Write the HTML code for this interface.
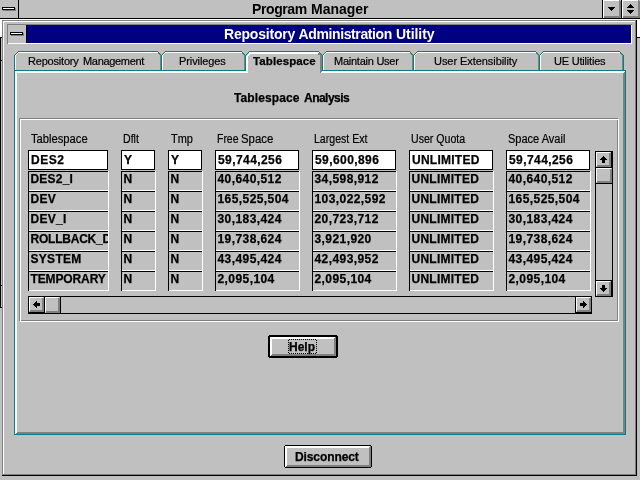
<!DOCTYPE html>
<html lang="en"><head><meta charset="utf-8"><title>Repository Administration Utility</title>
<style>
html,body{margin:0;padding:0;}
body{width:640px;height:480px;overflow:hidden;background:#c0c0c0;position:relative;font-family:"Liberation Sans",sans-serif;color:#000;}
#scr{position:absolute;left:0;top:0;width:640px;height:480px;overflow:hidden;will-change:transform;}
.r{position:absolute;}
.t{position:absolute;white-space:nowrap;display:block;}
.sys{font-weight:bold;font-size:14px;line-height:18px;letter-spacing:-0.2px;}
.cap{color:#fff;}
.tab{font-size:11px;line-height:13px;-webkit-text-stroke:0.2px #000;}
.tabb{font-size:11.5px;line-height:13px;font-weight:bold;-webkit-text-stroke:0.25px #000;}
.hdg{font-size:12px;line-height:14px;font-weight:bold;-webkit-text-stroke:0.25px #000;}
.hdr{font-size:12px;line-height:14px;transform-origin:0 0;-webkit-text-stroke:0.2px #000;}
.btn{font-size:12px;line-height:16px;font-weight:bold;-webkit-text-stroke:0.25px #000;}
.cell{position:absolute;box-sizing:border-box;border-top:1px solid #000;border-left:1px solid #000;border-right:1px solid #fff;border-bottom:1px solid #fff;overflow:hidden;}
.cell.act{background:#fff;border:1px solid #000;}
.ct{position:absolute;white-space:nowrap;font-weight:bold;font-size:12px;line-height:14px;letter-spacing:0.42px;-webkit-text-stroke:0.25px #000;}
</style></head>
<body>
<div id="scr">
<div class="r" style="left:0px;top:0px;width:640px;height:18px;background:#c0c0c0;"></div>
<div class="r" style="left:0px;top:18px;width:640px;height:1px;background:#000;"></div>
<div class="r" style="left:18px;top:0px;width:1px;height:19px;background:#000;"></div>
<div class="r" style="left:3px;top:8px;width:13px;height:3px;background:#808080;"></div>
<div class="r" style="left:2px;top:7px;width:13px;height:3px;background:#000;"></div>
<div class="r" style="left:3px;top:8px;width:11px;height:1px;background:#fff;"></div>
<div class="r" style="left:602px;top:0px;width:1px;height:19px;background:#000;"></div>
<div class="r" style="left:603px;top:0px;width:18px;height:18px;background:#c0c0c0;"></div>
<div class="r" style="left:603px;top:0px;width:1px;height:18px;background:#fff;"></div>
<div class="r" style="left:603px;top:0px;width:16px;height:1px;background:#fff;"></div>
<div class="r" style="left:619px;top:1px;width:2px;height:17px;background:#808080;"></div>
<div class="r" style="left:604px;top:16px;width:17px;height:2px;background:#808080;"></div>
<div class="r" style="left:619px;top:0px;width:1px;height:1px;background:#808080;"></div>
<div class="r" style="left:621px;top:0px;width:1px;height:19px;background:#000;"></div>
<div class="r" style="left:622px;top:0px;width:18px;height:18px;background:#c0c0c0;"></div>
<div class="r" style="left:622px;top:0px;width:1px;height:18px;background:#fff;"></div>
<div class="r" style="left:622px;top:0px;width:16px;height:1px;background:#fff;"></div>
<div class="r" style="left:638px;top:1px;width:2px;height:17px;background:#808080;"></div>
<div class="r" style="left:623px;top:16px;width:17px;height:2px;background:#808080;"></div>
<div class="r" style="left:638px;top:0px;width:1px;height:1px;background:#808080;"></div>
<div class="r" style="left:608px;top:7px;width:7px;height:1px;background:#000;"></div>
<div class="r" style="left:609px;top:8px;width:5px;height:1px;background:#000;"></div>
<div class="r" style="left:610px;top:9px;width:3px;height:1px;background:#000;"></div>
<div class="r" style="left:611px;top:10px;width:1px;height:1px;background:#000;"></div>
<div class="r" style="left:630px;top:4px;width:1px;height:1px;background:#000;"></div>
<div class="r" style="left:629px;top:5px;width:3px;height:1px;background:#000;"></div>
<div class="r" style="left:628px;top:6px;width:5px;height:1px;background:#000;"></div>
<div class="r" style="left:627px;top:7px;width:7px;height:1px;background:#000;"></div>
<div class="r" style="left:627px;top:10px;width:7px;height:1px;background:#000;"></div>
<div class="r" style="left:628px;top:11px;width:5px;height:1px;background:#000;"></div>
<div class="r" style="left:629px;top:12px;width:3px;height:1px;background:#000;"></div>
<div class="r" style="left:630px;top:13px;width:1px;height:1px;background:#000;"></div>
<span class="t sys" style="left:252px;top:0px;letter-spacing:-0.4px;">Program</span>
<span class="t sys" style="left:311px;top:0px;letter-spacing:-0.03px;">Manager</span>
<div class="r" style="left:0px;top:19px;width:640px;height:18px;background:#fff;"></div>
<div class="r" style="left:0px;top:37px;width:640px;height:443px;background:#c0c0c0;"></div>
<div class="r" style="left:0px;top:37px;width:2px;height:1px;background:#000;"></div>
<div class="r" style="left:637px;top:37px;width:3px;height:1px;background:#000;"></div>
<div class="r" style="left:0px;top:37px;width:1px;height:271px;background:#000;"></div>
<div class="r" style="left:0px;top:307px;width:2px;height:1px;background:#000;"></div>
<div class="r" style="left:1px;top:60px;width:1px;height:1px;background:#000;"></div>
<div class="r" style="left:1px;top:285px;width:1px;height:1px;background:#000;"></div>
<div class="r" style="left:2px;top:20px;width:635px;height:456px;background:#c0c0c0;"></div>
<div class="r" style="left:2px;top:20px;width:1px;height:456px;background:#808080;"></div>
<div class="r" style="left:2px;top:20px;width:635px;height:1px;background:#808080;"></div>
<div class="r" style="left:3px;top:21px;width:1px;height:454px;background:#fff;"></div>
<div class="r" style="left:3px;top:21px;width:633px;height:1px;background:#fff;"></div>
<div class="r" style="left:635px;top:21px;width:1px;height:454px;background:#808080;"></div>
<div class="r" style="left:3px;top:474px;width:633px;height:1px;background:#808080;"></div>
<div class="r" style="left:636px;top:20px;width:1px;height:456px;background:#000;"></div>
<div class="r" style="left:2px;top:475px;width:635px;height:1px;background:#000;"></div>
<div class="r" style="left:7px;top:24px;width:1px;height:20px;background:#808080;"></div>
<div class="r" style="left:7px;top:24px;width:625px;height:1px;background:#808080;"></div>
<div class="r" style="left:631px;top:25px;width:1px;height:19px;background:#fff;"></div>
<div class="r" style="left:8px;top:43px;width:624px;height:1px;background:#fff;"></div>
<div class="r" style="left:8px;top:25px;width:18px;height:18px;background:#c0c0c0;"></div>
<div class="r" style="left:26px;top:25px;width:1px;height:18px;background:#000;"></div>
<div class="r" style="left:27px;top:25px;width:604px;height:18px;background:#000080;"></div>
<div class="r" style="left:11px;top:33px;width:13px;height:3px;background:#808080;"></div>
<div class="r" style="left:10px;top:32px;width:13px;height:3px;background:#000;"></div>
<div class="r" style="left:11px;top:33px;width:11px;height:1px;background:#fff;"></div>
<span class="t sys cap" style="left:224px;top:25px;letter-spacing:-0.2px;">Repository</span>
<span class="t sys cap" style="left:298.5px;top:25px;letter-spacing:-0.38px;">Administration</span>
<span class="t sys cap" style="left:396px;top:25px;letter-spacing:-0.05px;">Utility</span>
<div class="r" style="left:18px;top:51px;width:140px;height:1px;background:#008080;"></div>
<div class="r" style="left:18px;top:52px;width:140px;height:1px;background:#fff;"></div>
<div class="r" style="left:17px;top:52px;width:1px;height:1px;background:#008080;"></div>
<div class="r" style="left:158px;top:52px;width:1px;height:1px;background:#008080;"></div>
<div class="r" style="left:16px;top:53px;width:1px;height:1px;background:#008080;"></div>
<div class="r" style="left:159px;top:53px;width:1px;height:1px;background:#008080;"></div>
<div class="r" style="left:15px;top:54px;width:1px;height:1px;background:#008080;"></div>
<div class="r" style="left:160px;top:54px;width:1px;height:1px;background:#008080;"></div>
<div class="r" style="left:14px;top:55px;width:1px;height:1px;background:#008080;"></div>
<div class="r" style="left:161px;top:55px;width:1px;height:1px;background:#008080;"></div>
<div class="r" style="left:17px;top:53px;width:1px;height:1px;background:#fff;"></div>
<div class="r" style="left:16px;top:54px;width:1px;height:1px;background:#fff;"></div>
<div class="r" style="left:15px;top:55px;width:1px;height:1px;background:#fff;"></div>
<div class="r" style="left:15px;top:56px;width:1px;height:14px;background:#fff;"></div>
<div class="r" style="left:165px;top:51px;width:77px;height:1px;background:#008080;"></div>
<div class="r" style="left:165px;top:52px;width:77px;height:1px;background:#fff;"></div>
<div class="r" style="left:164px;top:52px;width:1px;height:1px;background:#008080;"></div>
<div class="r" style="left:242px;top:52px;width:1px;height:1px;background:#008080;"></div>
<div class="r" style="left:163px;top:53px;width:1px;height:1px;background:#008080;"></div>
<div class="r" style="left:243px;top:53px;width:1px;height:1px;background:#008080;"></div>
<div class="r" style="left:162px;top:54px;width:1px;height:1px;background:#008080;"></div>
<div class="r" style="left:244px;top:54px;width:1px;height:1px;background:#008080;"></div>
<div class="r" style="left:161px;top:55px;width:1px;height:1px;background:#008080;"></div>
<div class="r" style="left:245px;top:55px;width:1px;height:1px;background:#008080;"></div>
<div class="r" style="left:164px;top:53px;width:1px;height:1px;background:#fff;"></div>
<div class="r" style="left:163px;top:54px;width:1px;height:1px;background:#fff;"></div>
<div class="r" style="left:162px;top:55px;width:1px;height:1px;background:#fff;"></div>
<div class="r" style="left:162px;top:56px;width:1px;height:14px;background:#fff;"></div>
<div class="r" style="left:249px;top:51px;width:70px;height:1px;background:#008080;"></div>
<div class="r" style="left:249px;top:52px;width:69px;height:2px;background:#fff;"></div>
<div class="r" style="left:318px;top:52px;width:1px;height:1px;background:#fff;"></div>
<div class="r" style="left:248px;top:52px;width:1px;height:1px;background:#008080;"></div>
<div class="r" style="left:319px;top:52px;width:1px;height:1px;background:#008080;"></div>
<div class="r" style="left:247px;top:53px;width:1px;height:1px;background:#008080;"></div>
<div class="r" style="left:320px;top:53px;width:1px;height:1px;background:#008080;"></div>
<div class="r" style="left:246px;top:54px;width:1px;height:1px;background:#008080;"></div>
<div class="r" style="left:321px;top:54px;width:1px;height:1px;background:#008080;"></div>
<div class="r" style="left:245px;top:55px;width:1px;height:1px;background:#008080;"></div>
<div class="r" style="left:322px;top:55px;width:1px;height:1px;background:#008080;"></div>
<div class="r" style="left:249px;top:53px;width:2px;height:1px;background:#fff;"></div>
<div class="r" style="left:248px;top:54px;width:2px;height:1px;background:#fff;"></div>
<div class="r" style="left:247px;top:55px;width:2px;height:1px;background:#fff;"></div>
<div class="r" style="left:246px;top:56px;width:2px;height:15px;background:#fff;"></div>
<div class="r" style="left:326px;top:51px;width:84px;height:1px;background:#008080;"></div>
<div class="r" style="left:326px;top:52px;width:84px;height:1px;background:#fff;"></div>
<div class="r" style="left:325px;top:52px;width:1px;height:1px;background:#008080;"></div>
<div class="r" style="left:410px;top:52px;width:1px;height:1px;background:#008080;"></div>
<div class="r" style="left:324px;top:53px;width:1px;height:1px;background:#008080;"></div>
<div class="r" style="left:411px;top:53px;width:1px;height:1px;background:#008080;"></div>
<div class="r" style="left:323px;top:54px;width:1px;height:1px;background:#008080;"></div>
<div class="r" style="left:412px;top:54px;width:1px;height:1px;background:#008080;"></div>
<div class="r" style="left:322px;top:55px;width:1px;height:1px;background:#008080;"></div>
<div class="r" style="left:413px;top:55px;width:1px;height:1px;background:#008080;"></div>
<div class="r" style="left:325px;top:53px;width:1px;height:1px;background:#fff;"></div>
<div class="r" style="left:324px;top:54px;width:1px;height:1px;background:#fff;"></div>
<div class="r" style="left:323px;top:55px;width:1px;height:1px;background:#fff;"></div>
<div class="r" style="left:323px;top:56px;width:1px;height:14px;background:#fff;"></div>
<div class="r" style="left:417px;top:51px;width:119px;height:1px;background:#008080;"></div>
<div class="r" style="left:417px;top:52px;width:119px;height:1px;background:#fff;"></div>
<div class="r" style="left:416px;top:52px;width:1px;height:1px;background:#008080;"></div>
<div class="r" style="left:536px;top:52px;width:1px;height:1px;background:#008080;"></div>
<div class="r" style="left:415px;top:53px;width:1px;height:1px;background:#008080;"></div>
<div class="r" style="left:537px;top:53px;width:1px;height:1px;background:#008080;"></div>
<div class="r" style="left:414px;top:54px;width:1px;height:1px;background:#008080;"></div>
<div class="r" style="left:538px;top:54px;width:1px;height:1px;background:#008080;"></div>
<div class="r" style="left:413px;top:55px;width:1px;height:1px;background:#008080;"></div>
<div class="r" style="left:539px;top:55px;width:1px;height:1px;background:#008080;"></div>
<div class="r" style="left:416px;top:53px;width:1px;height:1px;background:#fff;"></div>
<div class="r" style="left:415px;top:54px;width:1px;height:1px;background:#fff;"></div>
<div class="r" style="left:414px;top:55px;width:1px;height:1px;background:#fff;"></div>
<div class="r" style="left:414px;top:56px;width:1px;height:14px;background:#fff;"></div>
<div class="r" style="left:543px;top:51px;width:77px;height:1px;background:#008080;"></div>
<div class="r" style="left:543px;top:52px;width:77px;height:1px;background:#fff;"></div>
<div class="r" style="left:542px;top:52px;width:1px;height:1px;background:#008080;"></div>
<div class="r" style="left:620px;top:52px;width:1px;height:1px;background:#008080;"></div>
<div class="r" style="left:541px;top:53px;width:1px;height:1px;background:#008080;"></div>
<div class="r" style="left:621px;top:53px;width:1px;height:1px;background:#008080;"></div>
<div class="r" style="left:540px;top:54px;width:1px;height:1px;background:#008080;"></div>
<div class="r" style="left:622px;top:54px;width:1px;height:1px;background:#008080;"></div>
<div class="r" style="left:539px;top:55px;width:1px;height:1px;background:#008080;"></div>
<div class="r" style="left:623px;top:55px;width:1px;height:1px;background:#008080;"></div>
<div class="r" style="left:542px;top:53px;width:1px;height:1px;background:#fff;"></div>
<div class="r" style="left:541px;top:54px;width:1px;height:1px;background:#fff;"></div>
<div class="r" style="left:540px;top:55px;width:1px;height:1px;background:#fff;"></div>
<div class="r" style="left:540px;top:56px;width:1px;height:14px;background:#fff;"></div>
<div class="r" style="left:14px;top:55px;width:1px;height:16px;background:#008080;"></div>
<div class="r" style="left:161px;top:55px;width:1px;height:16px;background:#008080;"></div>
<div class="r" style="left:245px;top:55px;width:1px;height:16px;background:#008080;"></div>
<div class="r" style="left:322px;top:55px;width:1px;height:16px;background:#008080;"></div>
<div class="r" style="left:413px;top:55px;width:1px;height:16px;background:#008080;"></div>
<div class="r" style="left:539px;top:55px;width:1px;height:16px;background:#008080;"></div>
<div class="r" style="left:623px;top:55px;width:1px;height:16px;background:#008080;"></div>
<div class="r" style="left:318px;top:53px;width:2px;height:1px;background:#808080;"></div>
<div class="r" style="left:319px;top:54px;width:2px;height:1px;background:#808080;"></div>
<div class="r" style="left:318px;top:54px;width:1px;height:1px;background:#808080;"></div>
<div class="r" style="left:320px;top:55px;width:2px;height:17px;background:#808080;"></div>
<div class="r" style="left:320px;top:72px;width:1px;height:1px;background:#808080;"></div>
<div class="r" style="left:321px;top:72px;width:1px;height:1px;background:#fff;"></div>
<div class="r" style="left:322px;top:71px;width:1px;height:2px;background:#fff;"></div>
<div class="r" style="left:160px;top:56px;width:1px;height:14px;background:#808080;"></div>
<div class="r" style="left:158px;top:53px;width:1px;height:1px;background:#808080;"></div>
<div class="r" style="left:159px;top:54px;width:1px;height:1px;background:#808080;"></div>
<div class="r" style="left:160px;top:55px;width:1px;height:1px;background:#808080;"></div>
<div class="r" style="left:244px;top:56px;width:1px;height:14px;background:#808080;"></div>
<div class="r" style="left:242px;top:53px;width:1px;height:1px;background:#808080;"></div>
<div class="r" style="left:243px;top:54px;width:1px;height:1px;background:#808080;"></div>
<div class="r" style="left:244px;top:55px;width:1px;height:1px;background:#808080;"></div>
<div class="r" style="left:412px;top:56px;width:1px;height:14px;background:#808080;"></div>
<div class="r" style="left:410px;top:53px;width:1px;height:1px;background:#808080;"></div>
<div class="r" style="left:411px;top:54px;width:1px;height:1px;background:#808080;"></div>
<div class="r" style="left:412px;top:55px;width:1px;height:1px;background:#808080;"></div>
<div class="r" style="left:538px;top:56px;width:1px;height:14px;background:#808080;"></div>
<div class="r" style="left:536px;top:53px;width:1px;height:1px;background:#808080;"></div>
<div class="r" style="left:537px;top:54px;width:1px;height:1px;background:#808080;"></div>
<div class="r" style="left:538px;top:55px;width:1px;height:1px;background:#808080;"></div>
<div class="r" style="left:622px;top:56px;width:1px;height:14px;background:#808080;"></div>
<div class="r" style="left:620px;top:53px;width:1px;height:1px;background:#808080;"></div>
<div class="r" style="left:621px;top:54px;width:1px;height:1px;background:#808080;"></div>
<div class="r" style="left:622px;top:55px;width:1px;height:1px;background:#808080;"></div>
<div class="r" style="left:14px;top:70px;width:232px;height:1px;background:#008080;"></div>
<div class="r" style="left:322px;top:70px;width:304px;height:1px;background:#008080;"></div>
<div class="r" style="left:14px;top:70px;width:1px;height:365px;background:#008080;"></div>
<div class="r" style="left:625px;top:70px;width:1px;height:365px;background:#008080;"></div>
<div class="r" style="left:14px;top:434px;width:612px;height:1px;background:#008080;"></div>
<div class="r" style="left:15px;top:71px;width:233px;height:2px;background:#fff;"></div>
<div class="r" style="left:323px;top:71px;width:300px;height:2px;background:#fff;"></div>
<div class="r" style="left:15px;top:71px;width:2px;height:362px;background:#fff;"></div>
<div class="r" style="left:623px;top:72px;width:2px;height:362px;background:#808080;"></div>
<div class="r" style="left:623px;top:72px;width:1px;height:1px;background:#fff;"></div>
<div class="r" style="left:623px;top:71px;width:2px;height:1px;background:#fff;"></div>
<div class="r" style="left:16px;top:432px;width:609px;height:2px;background:#808080;"></div>
<div class="r" style="left:16px;top:432px;width:1px;height:1px;background:#fff;"></div>
<div class="r" style="left:15px;top:433px;width:1px;height:1px;background:#fff;"></div>
<span class="t tab" style="left:28px;top:55px;letter-spacing:-0.2px;">Repository</span>
<span class="t tab" style="left:83px;top:55px;letter-spacing:-0.32px;">Management</span>
<span class="t tab" style="left:179px;top:55px;letter-spacing:-0.1px;">Privileges</span>
<span class="t tabb" style="left:253px;top:55px;letter-spacing:0.1px;">Tablespace</span>
<span class="t tab" style="left:334px;top:55px;letter-spacing:-0.25px;">Maintain User</span>
<span class="t tab" style="left:434px;top:55px;letter-spacing:-0.06px;">User Extensibility</span>
<span class="t tab" style="left:554px;top:55px;letter-spacing:-0.2px;">UE Utilities</span>
<span class="t hdg" style="left:234px;top:91px;letter-spacing:0.1px;">Tablespace</span>
<span class="t hdg" style="left:304px;top:91px;letter-spacing:-0.52px;">Analysis</span>
<div class="r" style="left:19px;top:118px;width:599px;height:1px;background:#808080;"></div>
<div class="r" style="left:19px;top:320px;width:599px;height:1px;background:#808080;"></div>
<div class="r" style="left:19px;top:118px;width:1px;height:203px;background:#808080;"></div>
<div class="r" style="left:617px;top:118px;width:1px;height:203px;background:#808080;"></div>
<div class="r" style="left:20px;top:119px;width:599px;height:1px;background:#fff;"></div>
<div class="r" style="left:20px;top:321px;width:599px;height:1px;background:#fff;"></div>
<div class="r" style="left:20px;top:119px;width:1px;height:203px;background:#fff;"></div>
<div class="r" style="left:618px;top:119px;width:1px;height:203px;background:#fff;"></div>
<span class="t hdr" style="left:31px;top:132px;transform:scaleX(0.933);">Tablespace</span>
<div class="cell act" style="left:28px;top:150px;width:80px;height:20px;"><span class="ct" style="left:2px;top:2px;letter-spacing:0.5px;">DES2</span></div>
<div class="cell" style="left:28px;top:171px;width:81px;height:20px;"><span class="ct" style="left:1.5px;top:0px;letter-spacing:0.2px;">DES2_I</span></div>
<div class="r" style="left:28px;top:190px;width:1px;height:1px;background:#000;"></div>
<div class="r" style="left:108px;top:171px;width:1px;height:1px;background:#fff;"></div>
<div class="cell" style="left:28px;top:191px;width:81px;height:20px;"><span class="ct" style="left:1.5px;top:0px;letter-spacing:0.3px;">DEV</span></div>
<div class="r" style="left:28px;top:210px;width:1px;height:1px;background:#000;"></div>
<div class="r" style="left:108px;top:191px;width:1px;height:1px;background:#fff;"></div>
<div class="cell" style="left:28px;top:211px;width:81px;height:20px;"><span class="ct" style="left:1.5px;top:0px;letter-spacing:0.3px;">DEV_I</span></div>
<div class="r" style="left:28px;top:230px;width:1px;height:1px;background:#000;"></div>
<div class="r" style="left:108px;top:211px;width:1px;height:1px;background:#fff;"></div>
<div class="cell" style="left:28px;top:231px;width:81px;height:20px;"><span class="ct" style="left:1.5px;top:0px;letter-spacing:-0.22px;">ROLLBACK_D</span></div>
<div class="r" style="left:28px;top:250px;width:1px;height:1px;background:#000;"></div>
<div class="r" style="left:108px;top:231px;width:1px;height:1px;background:#fff;"></div>
<div class="cell" style="left:28px;top:251px;width:81px;height:20px;"><span class="ct" style="left:1.5px;top:0px;letter-spacing:0.3px;">SYSTEM</span></div>
<div class="r" style="left:28px;top:270px;width:1px;height:1px;background:#000;"></div>
<div class="r" style="left:108px;top:251px;width:1px;height:1px;background:#fff;"></div>
<div class="cell" style="left:28px;top:271px;width:81px;height:20px;"><span class="ct" style="left:1.5px;top:0px;letter-spacing:-0.12px;">TEMPORARY</span></div>
<div class="r" style="left:28px;top:290px;width:1px;height:1px;background:#000;"></div>
<div class="r" style="left:108px;top:271px;width:1px;height:1px;background:#fff;"></div>
<span class="t hdr" style="left:123px;top:132px;transform:scaleX(0.88);">Dflt</span>
<div class="cell act" style="left:121px;top:150px;width:34px;height:20px;"><span class="ct" style="left:2px;top:2px;">Y</span></div>
<div class="cell" style="left:121px;top:171px;width:35px;height:20px;"><span class="ct" style="left:1.5px;top:0px;">N</span></div>
<div class="r" style="left:121px;top:190px;width:1px;height:1px;background:#000;"></div>
<div class="r" style="left:155px;top:171px;width:1px;height:1px;background:#fff;"></div>
<div class="cell" style="left:121px;top:191px;width:35px;height:20px;"><span class="ct" style="left:1.5px;top:0px;">N</span></div>
<div class="r" style="left:121px;top:210px;width:1px;height:1px;background:#000;"></div>
<div class="r" style="left:155px;top:191px;width:1px;height:1px;background:#fff;"></div>
<div class="cell" style="left:121px;top:211px;width:35px;height:20px;"><span class="ct" style="left:1.5px;top:0px;">N</span></div>
<div class="r" style="left:121px;top:230px;width:1px;height:1px;background:#000;"></div>
<div class="r" style="left:155px;top:211px;width:1px;height:1px;background:#fff;"></div>
<div class="cell" style="left:121px;top:231px;width:35px;height:20px;"><span class="ct" style="left:1.5px;top:0px;">N</span></div>
<div class="r" style="left:121px;top:250px;width:1px;height:1px;background:#000;"></div>
<div class="r" style="left:155px;top:231px;width:1px;height:1px;background:#fff;"></div>
<div class="cell" style="left:121px;top:251px;width:35px;height:20px;"><span class="ct" style="left:1.5px;top:0px;">N</span></div>
<div class="r" style="left:121px;top:270px;width:1px;height:1px;background:#000;"></div>
<div class="r" style="left:155px;top:251px;width:1px;height:1px;background:#fff;"></div>
<div class="cell" style="left:121px;top:271px;width:35px;height:20px;"><span class="ct" style="left:1.5px;top:0px;">N</span></div>
<div class="r" style="left:121px;top:290px;width:1px;height:1px;background:#000;"></div>
<div class="r" style="left:155px;top:271px;width:1px;height:1px;background:#fff;"></div>
<span class="t hdr" style="left:171px;top:132px;transform:scaleX(0.913);">Tmp</span>
<div class="cell act" style="left:168px;top:150px;width:34px;height:20px;"><span class="ct" style="left:2px;top:2px;">Y</span></div>
<div class="cell" style="left:168px;top:171px;width:35px;height:20px;"><span class="ct" style="left:1.5px;top:0px;">N</span></div>
<div class="r" style="left:168px;top:190px;width:1px;height:1px;background:#000;"></div>
<div class="r" style="left:202px;top:171px;width:1px;height:1px;background:#fff;"></div>
<div class="cell" style="left:168px;top:191px;width:35px;height:20px;"><span class="ct" style="left:1.5px;top:0px;">N</span></div>
<div class="r" style="left:168px;top:210px;width:1px;height:1px;background:#000;"></div>
<div class="r" style="left:202px;top:191px;width:1px;height:1px;background:#fff;"></div>
<div class="cell" style="left:168px;top:211px;width:35px;height:20px;"><span class="ct" style="left:1.5px;top:0px;">N</span></div>
<div class="r" style="left:168px;top:230px;width:1px;height:1px;background:#000;"></div>
<div class="r" style="left:202px;top:211px;width:1px;height:1px;background:#fff;"></div>
<div class="cell" style="left:168px;top:231px;width:35px;height:20px;"><span class="ct" style="left:1.5px;top:0px;">N</span></div>
<div class="r" style="left:168px;top:250px;width:1px;height:1px;background:#000;"></div>
<div class="r" style="left:202px;top:231px;width:1px;height:1px;background:#fff;"></div>
<div class="cell" style="left:168px;top:251px;width:35px;height:20px;"><span class="ct" style="left:1.5px;top:0px;">N</span></div>
<div class="r" style="left:168px;top:270px;width:1px;height:1px;background:#000;"></div>
<div class="r" style="left:202px;top:251px;width:1px;height:1px;background:#fff;"></div>
<div class="cell" style="left:168px;top:271px;width:35px;height:20px;"><span class="ct" style="left:1.5px;top:0px;">N</span></div>
<div class="r" style="left:168px;top:290px;width:1px;height:1px;background:#000;"></div>
<div class="r" style="left:202px;top:271px;width:1px;height:1px;background:#fff;"></div>
<span class="t hdr" style="left:217px;top:132px;transform:scaleX(0.87);">Free</span>
<span class="t hdr" style="left:241px;top:132px;transform:scaleX(0.95);">Space</span>
<div class="cell act" style="left:215px;top:150px;width:84px;height:20px;"><span class="ct" style="left:2px;top:2px;">59,744,256</span></div>
<div class="cell" style="left:215px;top:171px;width:85px;height:20px;"><span class="ct" style="left:1.5px;top:0px;">40,640,512</span></div>
<div class="r" style="left:215px;top:190px;width:1px;height:1px;background:#000;"></div>
<div class="r" style="left:299px;top:171px;width:1px;height:1px;background:#fff;"></div>
<div class="cell" style="left:215px;top:191px;width:85px;height:20px;"><span class="ct" style="left:1.5px;top:0px;">165,525,504</span></div>
<div class="r" style="left:215px;top:210px;width:1px;height:1px;background:#000;"></div>
<div class="r" style="left:299px;top:191px;width:1px;height:1px;background:#fff;"></div>
<div class="cell" style="left:215px;top:211px;width:85px;height:20px;"><span class="ct" style="left:1.5px;top:0px;">30,183,424</span></div>
<div class="r" style="left:215px;top:230px;width:1px;height:1px;background:#000;"></div>
<div class="r" style="left:299px;top:211px;width:1px;height:1px;background:#fff;"></div>
<div class="cell" style="left:215px;top:231px;width:85px;height:20px;"><span class="ct" style="left:1.5px;top:0px;">19,738,624</span></div>
<div class="r" style="left:215px;top:250px;width:1px;height:1px;background:#000;"></div>
<div class="r" style="left:299px;top:231px;width:1px;height:1px;background:#fff;"></div>
<div class="cell" style="left:215px;top:251px;width:85px;height:20px;"><span class="ct" style="left:1.5px;top:0px;">43,495,424</span></div>
<div class="r" style="left:215px;top:270px;width:1px;height:1px;background:#000;"></div>
<div class="r" style="left:299px;top:251px;width:1px;height:1px;background:#fff;"></div>
<div class="cell" style="left:215px;top:271px;width:85px;height:20px;"><span class="ct" style="left:1.5px;top:0px;">2,095,104</span></div>
<div class="r" style="left:215px;top:290px;width:1px;height:1px;background:#000;"></div>
<div class="r" style="left:299px;top:271px;width:1px;height:1px;background:#fff;"></div>
<span class="t hdr" style="left:314px;top:132px;transform:scaleX(0.88);">Largest Ext</span>
<div class="cell act" style="left:312px;top:150px;width:84px;height:20px;"><span class="ct" style="left:2px;top:2px;">59,600,896</span></div>
<div class="cell" style="left:312px;top:171px;width:85px;height:20px;"><span class="ct" style="left:1.5px;top:0px;">34,598,912</span></div>
<div class="r" style="left:312px;top:190px;width:1px;height:1px;background:#000;"></div>
<div class="r" style="left:396px;top:171px;width:1px;height:1px;background:#fff;"></div>
<div class="cell" style="left:312px;top:191px;width:85px;height:20px;"><span class="ct" style="left:1.5px;top:0px;">103,022,592</span></div>
<div class="r" style="left:312px;top:210px;width:1px;height:1px;background:#000;"></div>
<div class="r" style="left:396px;top:191px;width:1px;height:1px;background:#fff;"></div>
<div class="cell" style="left:312px;top:211px;width:85px;height:20px;"><span class="ct" style="left:1.5px;top:0px;">20,723,712</span></div>
<div class="r" style="left:312px;top:230px;width:1px;height:1px;background:#000;"></div>
<div class="r" style="left:396px;top:211px;width:1px;height:1px;background:#fff;"></div>
<div class="cell" style="left:312px;top:231px;width:85px;height:20px;"><span class="ct" style="left:1.5px;top:0px;">3,921,920</span></div>
<div class="r" style="left:312px;top:250px;width:1px;height:1px;background:#000;"></div>
<div class="r" style="left:396px;top:231px;width:1px;height:1px;background:#fff;"></div>
<div class="cell" style="left:312px;top:251px;width:85px;height:20px;"><span class="ct" style="left:1.5px;top:0px;">42,493,952</span></div>
<div class="r" style="left:312px;top:270px;width:1px;height:1px;background:#000;"></div>
<div class="r" style="left:396px;top:251px;width:1px;height:1px;background:#fff;"></div>
<div class="cell" style="left:312px;top:271px;width:85px;height:20px;"><span class="ct" style="left:1.5px;top:0px;">2,095,104</span></div>
<div class="r" style="left:312px;top:290px;width:1px;height:1px;background:#000;"></div>
<div class="r" style="left:396px;top:271px;width:1px;height:1px;background:#fff;"></div>
<span class="t hdr" style="left:411px;top:132px;transform:scaleX(0.883);">User Quota</span>
<div class="cell act" style="left:409px;top:150px;width:84px;height:20px;"><span class="ct" style="left:2px;top:2px;letter-spacing:0.25px;">UNLIMITED</span></div>
<div class="cell" style="left:409px;top:171px;width:85px;height:20px;"><span class="ct" style="left:1.5px;top:0px;letter-spacing:0.25px;">UNLIMITED</span></div>
<div class="r" style="left:409px;top:190px;width:1px;height:1px;background:#000;"></div>
<div class="r" style="left:493px;top:171px;width:1px;height:1px;background:#fff;"></div>
<div class="cell" style="left:409px;top:191px;width:85px;height:20px;"><span class="ct" style="left:1.5px;top:0px;letter-spacing:0.25px;">UNLIMITED</span></div>
<div class="r" style="left:409px;top:210px;width:1px;height:1px;background:#000;"></div>
<div class="r" style="left:493px;top:191px;width:1px;height:1px;background:#fff;"></div>
<div class="cell" style="left:409px;top:211px;width:85px;height:20px;"><span class="ct" style="left:1.5px;top:0px;letter-spacing:0.25px;">UNLIMITED</span></div>
<div class="r" style="left:409px;top:230px;width:1px;height:1px;background:#000;"></div>
<div class="r" style="left:493px;top:211px;width:1px;height:1px;background:#fff;"></div>
<div class="cell" style="left:409px;top:231px;width:85px;height:20px;"><span class="ct" style="left:1.5px;top:0px;letter-spacing:0.25px;">UNLIMITED</span></div>
<div class="r" style="left:409px;top:250px;width:1px;height:1px;background:#000;"></div>
<div class="r" style="left:493px;top:231px;width:1px;height:1px;background:#fff;"></div>
<div class="cell" style="left:409px;top:251px;width:85px;height:20px;"><span class="ct" style="left:1.5px;top:0px;letter-spacing:0.25px;">UNLIMITED</span></div>
<div class="r" style="left:409px;top:270px;width:1px;height:1px;background:#000;"></div>
<div class="r" style="left:493px;top:251px;width:1px;height:1px;background:#fff;"></div>
<div class="cell" style="left:409px;top:271px;width:85px;height:20px;"><span class="ct" style="left:1.5px;top:0px;letter-spacing:0.25px;">UNLIMITED</span></div>
<div class="r" style="left:409px;top:290px;width:1px;height:1px;background:#000;"></div>
<div class="r" style="left:493px;top:271px;width:1px;height:1px;background:#fff;"></div>
<span class="t hdr" style="left:508px;top:132px;transform:scaleX(0.918);">Space Avail</span>
<div class="cell act" style="left:506px;top:150px;width:84px;height:20px;"><span class="ct" style="left:2px;top:2px;">59,744,256</span></div>
<div class="cell" style="left:506px;top:171px;width:85px;height:20px;"><span class="ct" style="left:1.5px;top:0px;">40,640,512</span></div>
<div class="r" style="left:506px;top:190px;width:1px;height:1px;background:#000;"></div>
<div class="r" style="left:590px;top:171px;width:1px;height:1px;background:#fff;"></div>
<div class="cell" style="left:506px;top:191px;width:85px;height:20px;"><span class="ct" style="left:1.5px;top:0px;">165,525,504</span></div>
<div class="r" style="left:506px;top:210px;width:1px;height:1px;background:#000;"></div>
<div class="r" style="left:590px;top:191px;width:1px;height:1px;background:#fff;"></div>
<div class="cell" style="left:506px;top:211px;width:85px;height:20px;"><span class="ct" style="left:1.5px;top:0px;">30,183,424</span></div>
<div class="r" style="left:506px;top:230px;width:1px;height:1px;background:#000;"></div>
<div class="r" style="left:590px;top:211px;width:1px;height:1px;background:#fff;"></div>
<div class="cell" style="left:506px;top:231px;width:85px;height:20px;"><span class="ct" style="left:1.5px;top:0px;">19,738,624</span></div>
<div class="r" style="left:506px;top:250px;width:1px;height:1px;background:#000;"></div>
<div class="r" style="left:590px;top:231px;width:1px;height:1px;background:#fff;"></div>
<div class="cell" style="left:506px;top:251px;width:85px;height:20px;"><span class="ct" style="left:1.5px;top:0px;">43,495,424</span></div>
<div class="r" style="left:506px;top:270px;width:1px;height:1px;background:#000;"></div>
<div class="r" style="left:590px;top:251px;width:1px;height:1px;background:#fff;"></div>
<div class="cell" style="left:506px;top:271px;width:85px;height:20px;"><span class="ct" style="left:1.5px;top:0px;">2,095,104</span></div>
<div class="r" style="left:506px;top:290px;width:1px;height:1px;background:#000;"></div>
<div class="r" style="left:590px;top:271px;width:1px;height:1px;background:#fff;"></div>
<div class="r" style="left:595px;top:151px;width:18px;height:146px;background:#000;"></div>
<div class="r" style="left:596px;top:152px;width:16px;height:144px;background:#c0c0c0;"></div>
<div class="r" style="left:596px;top:152px;width:15px;height:15px;background:#c0c0c0;"></div>
<div class="r" style="left:596px;top:152px;width:14px;height:1px;background:#fff;"></div>
<div class="r" style="left:596px;top:152px;width:1px;height:14px;background:#fff;"></div>
<div class="r" style="left:609px;top:153px;width:2px;height:14px;background:#808080;"></div>
<div class="r" style="left:597px;top:165px;width:14px;height:2px;background:#808080;"></div>
<div class="r" style="left:596px;top:167px;width:16px;height:1px;background:#000;"></div>
<div class="r" style="left:611px;top:152px;width:1px;height:15px;background:#000;"></div>
<div class="r" style="left:596px;top:168px;width:16px;height:15px;background:#c0c0c0;"></div>
<div class="r" style="left:596px;top:168px;width:15px;height:1px;background:#fff;"></div>
<div class="r" style="left:596px;top:168px;width:1px;height:14px;background:#fff;"></div>
<div class="r" style="left:610px;top:169px;width:2px;height:14px;background:#808080;"></div>
<div class="r" style="left:597px;top:181px;width:15px;height:2px;background:#808080;"></div>
<div class="r" style="left:596px;top:183px;width:16px;height:1px;background:#000;"></div>
<div class="r" style="left:596px;top:280px;width:16px;height:1px;background:#000;"></div>
<div class="r" style="left:596px;top:281px;width:15px;height:15px;background:#c0c0c0;"></div>
<div class="r" style="left:596px;top:281px;width:14px;height:1px;background:#fff;"></div>
<div class="r" style="left:596px;top:281px;width:1px;height:14px;background:#fff;"></div>
<div class="r" style="left:609px;top:282px;width:2px;height:14px;background:#808080;"></div>
<div class="r" style="left:597px;top:294px;width:14px;height:2px;background:#808080;"></div>
<div class="r" style="left:611px;top:281px;width:1px;height:15px;background:#000;"></div>
<div class="r" style="left:603px;top:156px;width:1px;height:1px;background:#000;"></div>
<div class="r" style="left:602px;top:157px;width:3px;height:1px;background:#000;"></div>
<div class="r" style="left:601px;top:158px;width:5px;height:1px;background:#000;"></div>
<div class="r" style="left:600px;top:159px;width:7px;height:1px;background:#000;"></div>
<div class="r" style="left:602px;top:160px;width:3px;height:3px;background:#000;"></div>
<div class="r" style="left:602px;top:285px;width:3px;height:3px;background:#000;"></div>
<div class="r" style="left:600px;top:288px;width:7px;height:1px;background:#000;"></div>
<div class="r" style="left:601px;top:289px;width:5px;height:1px;background:#000;"></div>
<div class="r" style="left:602px;top:290px;width:3px;height:1px;background:#000;"></div>
<div class="r" style="left:603px;top:291px;width:1px;height:1px;background:#000;"></div>
<div class="r" style="left:28px;top:296px;width:564px;height:18px;background:#000;"></div>
<div class="r" style="left:29px;top:297px;width:562px;height:16px;background:#c0c0c0;"></div>
<div class="r" style="left:29px;top:297px;width:15px;height:15px;background:#c0c0c0;"></div>
<div class="r" style="left:29px;top:297px;width:14px;height:1px;background:#fff;"></div>
<div class="r" style="left:29px;top:297px;width:1px;height:14px;background:#fff;"></div>
<div class="r" style="left:42px;top:298px;width:2px;height:14px;background:#808080;"></div>
<div class="r" style="left:30px;top:310px;width:14px;height:2px;background:#808080;"></div>
<div class="r" style="left:44px;top:297px;width:1px;height:16px;background:#000;"></div>
<div class="r" style="left:29px;top:312px;width:15px;height:1px;background:#000;"></div>
<div class="r" style="left:45px;top:297px;width:15px;height:16px;background:#c0c0c0;"></div>
<div class="r" style="left:45px;top:297px;width:14px;height:1px;background:#fff;"></div>
<div class="r" style="left:45px;top:297px;width:1px;height:15px;background:#fff;"></div>
<div class="r" style="left:58px;top:298px;width:2px;height:15px;background:#808080;"></div>
<div class="r" style="left:46px;top:311px;width:14px;height:2px;background:#808080;"></div>
<div class="r" style="left:60px;top:297px;width:1px;height:16px;background:#000;"></div>
<div class="r" style="left:575px;top:297px;width:1px;height:16px;background:#000;"></div>
<div class="r" style="left:576px;top:297px;width:15px;height:15px;background:#c0c0c0;"></div>
<div class="r" style="left:576px;top:297px;width:14px;height:1px;background:#fff;"></div>
<div class="r" style="left:576px;top:297px;width:1px;height:14px;background:#fff;"></div>
<div class="r" style="left:589px;top:298px;width:2px;height:14px;background:#808080;"></div>
<div class="r" style="left:577px;top:310px;width:14px;height:2px;background:#808080;"></div>
<div class="r" style="left:576px;top:312px;width:15px;height:1px;background:#000;"></div>
<div class="r" style="left:33px;top:304px;width:1px;height:1px;background:#000;"></div>
<div class="r" style="left:34px;top:303px;width:1px;height:3px;background:#000;"></div>
<div class="r" style="left:35px;top:302px;width:1px;height:5px;background:#000;"></div>
<div class="r" style="left:36px;top:301px;width:1px;height:7px;background:#000;"></div>
<div class="r" style="left:37px;top:303px;width:3px;height:3px;background:#000;"></div>
<div class="r" style="left:580px;top:303px;width:3px;height:3px;background:#000;"></div>
<div class="r" style="left:583px;top:301px;width:1px;height:7px;background:#000;"></div>
<div class="r" style="left:584px;top:302px;width:1px;height:5px;background:#000;"></div>
<div class="r" style="left:585px;top:303px;width:1px;height:3px;background:#000;"></div>
<div class="r" style="left:586px;top:304px;width:1px;height:1px;background:#000;"></div>
<div class="r" style="left:268px;top:335px;width:70px;height:23px;background:#000;"></div>
<div class="r" style="left:268px;top:335px;width:1px;height:1px;background:#c0c0c0;"></div>
<div class="r" style="left:337px;top:335px;width:1px;height:1px;background:#c0c0c0;"></div>
<div class="r" style="left:268px;top:357px;width:1px;height:1px;background:#c0c0c0;"></div>
<div class="r" style="left:337px;top:357px;width:1px;height:1px;background:#c0c0c0;"></div>
<div class="r" style="left:270px;top:337px;width:66px;height:19px;background:#c0c0c0;"></div>
<div class="r" style="left:270px;top:337px;width:66px;height:2px;background:#fff;"></div>
<div class="r" style="left:270px;top:337px;width:2px;height:19px;background:#fff;"></div>
<div class="r" style="left:334px;top:338px;width:2px;height:18px;background:#808080;"></div>
<div class="r" style="left:271px;top:354px;width:65px;height:2px;background:#808080;"></div>
<div class="r" style="left:334px;top:337px;width:1px;height:1px;background:#fff;"></div>
<div class="r" style="left:270px;top:355px;width:1px;height:1px;background:#fff;"></div>
<div class="r" style="left:335px;top:337px;width:1px;height:1px;background:#808080;"></div>
<div class="r" style="left:271px;top:354px;width:1px;height:1px;background:#fff;"></div>
<div class="r" style="left:289px;top:339px;width:27px;height:1px;background:repeating-linear-gradient(90deg,#000 0,#000 1px,transparent 1px,transparent 2px);"></div>
<div class="r" style="left:289px;top:353px;width:27px;height:1px;background:repeating-linear-gradient(90deg,#000 0,#000 1px,transparent 1px,transparent 2px);"></div>
<div class="r" style="left:288px;top:340px;width:1px;height:13px;background:repeating-linear-gradient(180deg,#000 0,#000 1px,transparent 1px,transparent 2px);"></div>
<div class="r" style="left:316px;top:340px;width:1px;height:13px;background:repeating-linear-gradient(180deg,#000 0,#000 1px,transparent 1px,transparent 2px);"></div>
<span class="t btn" style="left:289px;top:339px;">Help</span>
<div class="r" style="left:284px;top:445px;width:88px;height:23px;background:#000;"></div>
<div class="r" style="left:284px;top:445px;width:1px;height:1px;background:#c0c0c0;"></div>
<div class="r" style="left:371px;top:445px;width:1px;height:1px;background:#c0c0c0;"></div>
<div class="r" style="left:284px;top:467px;width:1px;height:1px;background:#c0c0c0;"></div>
<div class="r" style="left:371px;top:467px;width:1px;height:1px;background:#c0c0c0;"></div>
<div class="r" style="left:285px;top:446px;width:86px;height:21px;background:#c0c0c0;"></div>
<div class="r" style="left:285px;top:446px;width:86px;height:2px;background:#fff;"></div>
<div class="r" style="left:285px;top:446px;width:2px;height:21px;background:#fff;"></div>
<div class="r" style="left:369px;top:447px;width:2px;height:20px;background:#808080;"></div>
<div class="r" style="left:286px;top:465px;width:85px;height:2px;background:#808080;"></div>
<div class="r" style="left:369px;top:446px;width:1px;height:1px;background:#fff;"></div>
<div class="r" style="left:285px;top:466px;width:1px;height:1px;background:#fff;"></div>
<div class="r" style="left:370px;top:446px;width:1px;height:1px;background:#808080;"></div>
<div class="r" style="left:286px;top:465px;width:1px;height:1px;background:#fff;"></div>
<span class="t btn" style="left:295px;top:449px;letter-spacing:-0.1px;">Disconnect</span>
</div>
</body></html>
